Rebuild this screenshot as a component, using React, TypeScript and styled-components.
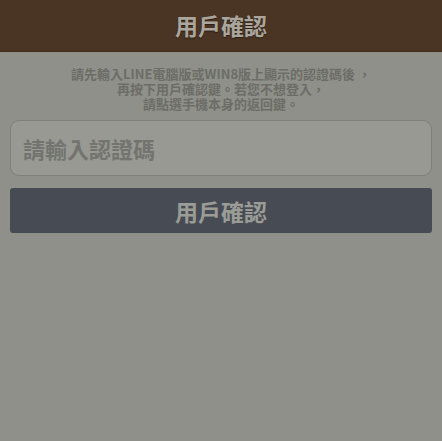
import styled, { createGlobalStyle } from "styled-components";

const GlobalStyle = createGlobalStyle`
  html, body {
    margin: 0;
    padding: 0;
    background: #8f9089;
  }
  body {
    font-family: "Noto Sans CJK TC", "Noto Sans", sans-serif;
  }
`;

const Page = styled.div`
  width: 442px;
  height: 441px;
  background: #8f9089;
  display: flex;
  flex-direction: column;
`;

const Header = styled.header`
  height: 51px;
  background: #4a3424;
  border-bottom: 1px solid #3f2c1e;
  display: flex;
  align-items: center;
  justify-content: center;
`;

const Title = styled.h1`
  margin: 0;
  font-size: 23px;
  font-weight: 700;
  color: #aaa69e;
  text-shadow: 0 1px 1px #2c1f14;
  line-height: 1;
`;

const Body = styled.main`
  display: flex;
  flex-direction: column;
  padding: 14px 10px 0 10px;
`;

const Notice = styled.p`
  margin: 0 0 9px;
  text-align: center;
  font-size: 13px;
  font-weight: 700;
  line-height: 15px;
  color: #6c6d67;
`;

const CodeInput = styled.input`
  box-sizing: border-box;
  width: 100%;
  height: 56px;
  margin-bottom: 12px;
  padding: 0 12px;
  border: 1px solid #7f807a;
  border-radius: 9px;
  background: #989993;
  font-family: "Noto Sans CJK TC", "Noto Sans", sans-serif;
  font-size: 22px;
  font-weight: 700;
  color: #5a5b57;
  outline: none;

  &::placeholder {
    color: #737470;
  }
`;

const ConfirmButton = styled.button`
  box-sizing: border-box;
  width: 100%;
  height: 45px;
  border: none;
  border-radius: 3px;
  background: #474c54;
  font-family: "Noto Sans CJK TC", "Noto Sans", sans-serif;
  font-size: 23px;
  font-weight: 700;
  color: #9b9c96;
  cursor: pointer;
`;

export default function App() {
  return (
    <>
      <GlobalStyle />
      <Page>
        <Header>
          <Title>用戶確認</Title>
        </Header>
        <Body>
          <Notice>
            請先輸入LINE電腦版或WIN8版上顯示的認證碼後 ，
            <br />
            再按下用戶確認鍵。若您不想登入，
            <br />
            請點選手機本身的返回鍵。
          </Notice>
          <CodeInput placeholder="請輸入認證碼" />
          <ConfirmButton>用戶確認</ConfirmButton>
        </Body>
      </Page>
    </>
  );
}
